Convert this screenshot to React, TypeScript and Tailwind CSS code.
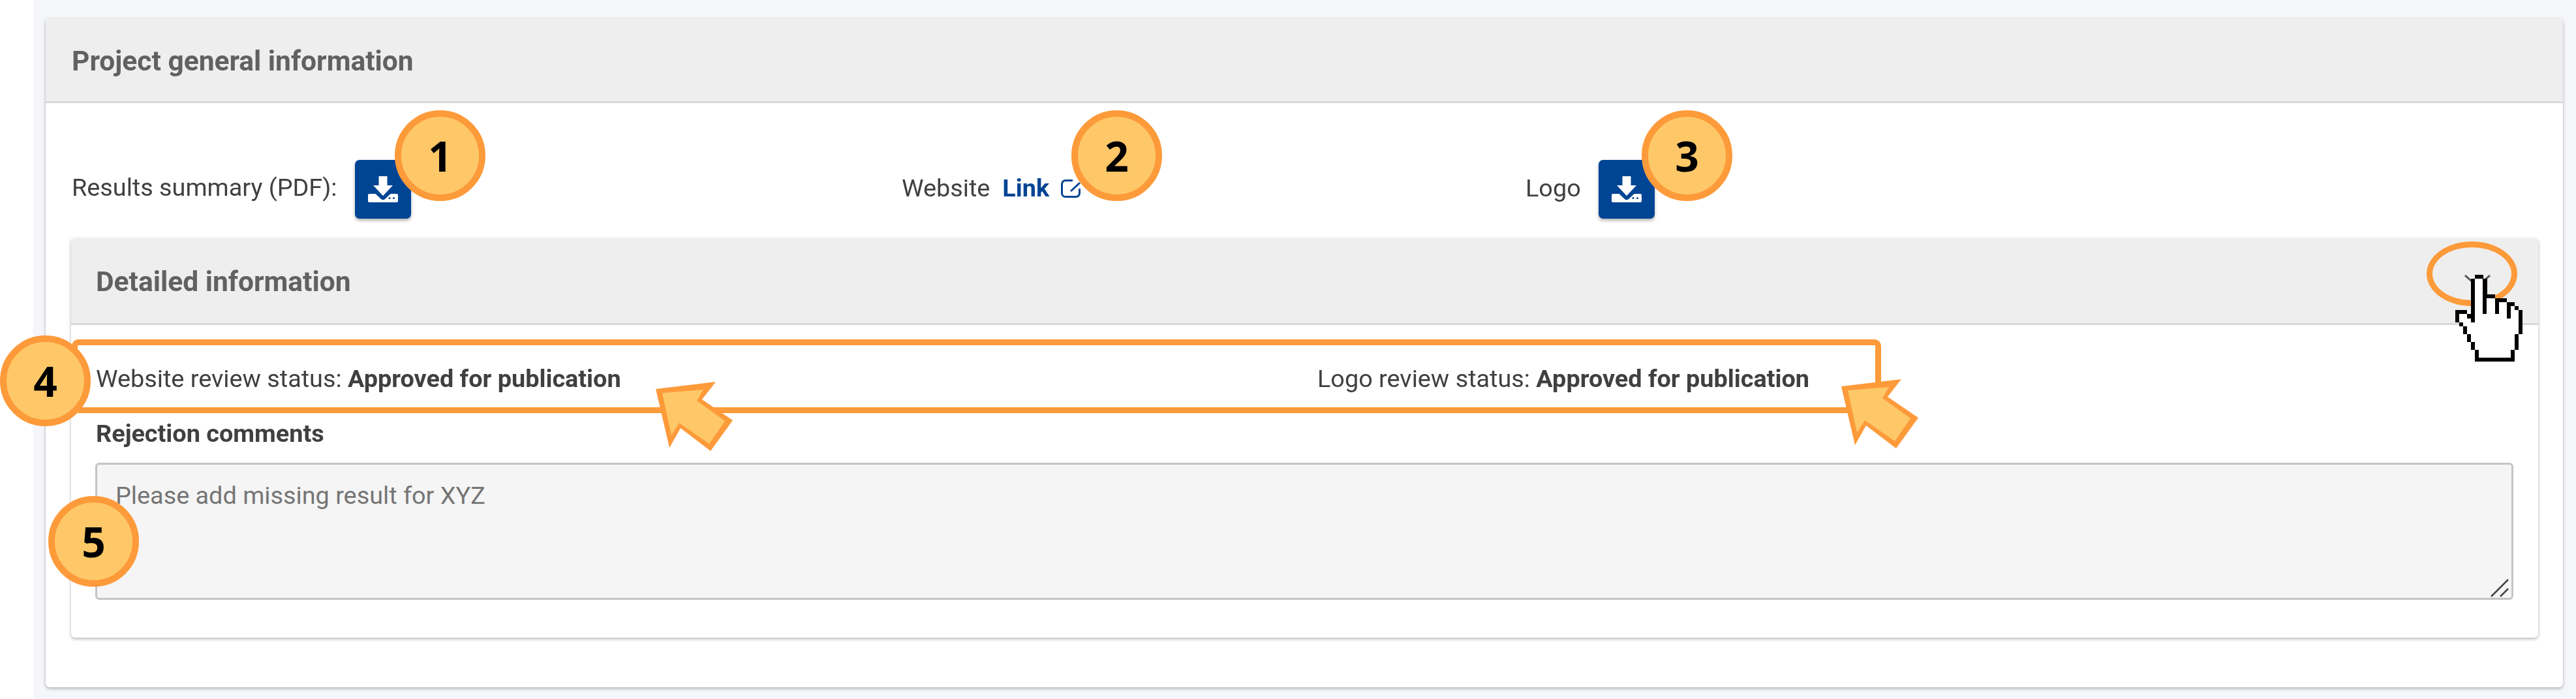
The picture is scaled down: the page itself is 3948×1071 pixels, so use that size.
const handRows = [
  "     ##          ",
  "    #..#         ",
  "    #..#         ",
  "    #..#         ",
  "    #..#         ",
  "    #..###       ",
  "    #..#..###    ",
  "    #..#..#..##  ",
  "    #..#..#..#.# ",
  "###.#..#..#..#..#",
  "#..##........#..#",
  "#...#...........#",
  " #..............#",
  "  #.............#",
  "  #.............#",
  "   #...........# ",
  "   #...........# ",
  "    #..........# ",
  "    #..........# ",
  "     #........#  ",
  "     #........#  ",
  "     ##########  ",
];

const DownloadButton = () => (
  <button className="flex h-[90px] w-[86px] items-center justify-center rounded-[7px] bg-[#004494] shadow-[0_3px_5px_rgba(0,0,0,0.3)]">
    <svg viewBox="0 0 46 40" className="h-[40px] w-[46px]">
      <path d="M16.5 0h13v14h8.5L23 30 8 14h8.5z" fill="#fff" />
      <path d="M2 27h9.5L20 35a4.5 4.5 0 0 0 6 0l8.500-8H44a2 2 0 0 1 2 2v9a2 2 0 0 1-2 2H2a2 2 0 0 1-2-2v-9a2 2 0 0 1 2-2z" fill="#fff" />
      <circle cx="33" cy="33.500" r="1.500" fill="#004494" />
      <circle cx="39.500" cy="33.500" r="1.500" fill="#004494" />
    </svg>
  </button>
);

const Arrow = ({ className }: { className: string }) => (
  <svg viewBox="2822 581 118 106" className={className}>
    <polygon points="2822,592 2914,581 2893,608 2940,640 2906,687 2860,652 2843,682" fill="#fd9a3a" />
    <polygon points="2832,598 2895,593 2885,610 2928,641 2904,676 2858,644 2846,663" fill="#fec868" />
  </svg>
);

const Badge = ({ n, className }: { n: number; className: string }) => (
  <div
    className={`absolute flex h-[139px] w-[139px] items-center justify-center rounded-full border-[10px] border-[#fd9a3a] bg-[#fec868] font-['Open_Sans',sans-serif] text-[64px] font-bold text-black ${className}`}
  >
    {n}
  </div>
);

export default function App() {
  return (
    <div className="relative flex h-[1071px] w-[3948px] overflow-hidden bg-white font-['Roboto',sans-serif] text-[37.8px] text-[#404040]">
      <div className="ml-[51px] flex-1 bg-[#f5f6fa] pt-[28px] pl-[19px] pr-[20px]">
        {/* Project general information */}
        <div className="h-[1025px] rounded-[6px] bg-white pb-[77px] shadow-[0_2px_5px_rgba(0,0,0,0.3)] blur-[0.5px]">
          <div className="flex h-[130px] items-center rounded-t-[6px] border-b-[3px] border-[#d8d8d8] bg-[#eeeeee] pt-[4px] pl-[40px] text-[42.5px] font-bold text-[#616161]">
            Project general information
          </div>

          <div className="flex items-center pt-[87px] pl-[40px]">
            <div className="flex w-[1272px] items-center gap-[27px]">
              <span className="pb-[5px]">Results summary (PDF):</span>
              <DownloadButton />
            </div>
            <div className="flex w-[956px] items-center pb-[3px]">
              <span>Website</span>
              <a className="ml-[19px] font-bold text-[#004494]">Link</a>
              <svg viewBox="0 0 30 28" className="ml-[18px] h-[28px] w-[30px]" fill="none" stroke="#004494" strokeWidth="3">
                <path d="M18 1.500H7A5.500 5.500 0 0 0 1.500 7v14A5.500 5.500 0 0 0 7 26.500h16a5.500 5.500 0 0 0 5.500-5.500v-7" />
                <path d="M15 18 29 5" />
              </svg>
            </div>
            <div className="flex items-center gap-[27px]">
              <span className="pb-[3px]">Logo</span>
              <DownloadButton />
            </div>
          </div>

          {/* Detailed information */}
          <div className="mt-[30px] ml-[39px] mr-[38px] rounded-[6px] bg-white pb-[58px] shadow-[0_2px_5px_rgba(0,0,0,0.3)]">
            <div className="flex h-[133px] items-center rounded-t-[6px] border-b-[3px] border-[#d8d8d8] bg-[#eeeeee] pt-[4px] pl-[38px] text-[42.5px] font-bold text-[#616161]">
              Detailed information
            </div>
            <div className="mt-[60px] flex h-[44px] items-center pl-[38px]">
              <div className="w-[1872px]">
                Website review status: <span className="font-bold">Approved for publication</span>
              </div>
              <div>
                Logo review status: <span className="font-bold">Approved for publication</span>
              </div>
            </div>
            <div className="mt-[40px] flex h-[44px] items-center pl-[38px] font-bold">Rejection comments</div>
            <div className="relative mt-[23px] ml-[37px] mr-[38px] h-[210px] rounded-[6px] border-[3px] border-[#c4c4c4] bg-[#f5f5f5] pt-[19px] pl-[28px] text-[#757575]">
              Please add missing result for XYZ
              <svg viewBox="0 0 28 28" className="absolute right-[4px] bottom-[1px] h-[28px] w-[28px]">
                <path d="M1 27 27 1M15 27 27 15" stroke="#444" strokeWidth="2.500" fill="none" />
              </svg>
            </div>
          </div>
        </div>
      </div>

      {/* Annotations */}
      <div className="absolute left-[110px] top-[520px] h-[113px] w-[2773px] rounded-[10px] border-[9px] border-[#fd9a3a]" />
      <Arrow className="absolute left-[1005px] top-[585px] h-[106px] w-[118px]" />
      <Arrow className="absolute left-[2822px] top-[581px] h-[106px] w-[118px]" />
      <Badge n={1} className="left-[605px] top-[169px]" />
      <Badge n={2} className="left-[1642px] top-[169px]" />
      <Badge n={3} className="left-[2516px] top-[169px]" />
      <Badge n={4} className="left-[0px] top-[514px]" />
      <Badge n={5} className="left-[74px] top-[760px]" />

      <div className="absolute left-[3719px] top-[370px] h-[99px] w-[139px] rounded-[50%] border-[9px] border-[#fd9a3a]" />
      <svg viewBox="0 0 40 20" className="absolute left-[3777px] top-[421px] h-[20px] w-[40px]">
        <path d="M1 1l19 17L39 1" stroke="#555" strokeWidth="3" fill="none" />
      </svg>
      <svg viewBox="0 0 17 22" shapeRendering="crispEdges" className="absolute left-[3763px] top-[420px] h-[135px] w-[103px]">
        {handRows.map((row, y) =>
          row.split("").map((c, x) =>
            c === " " ? null : <rect key={`${x}-${y}`} x={x} y={y} width="1.02" height="1.02" fill={c === "#" ? "#000" : "#fff"} />
          )
        )}
      </svg>
    </div>
  );
}
